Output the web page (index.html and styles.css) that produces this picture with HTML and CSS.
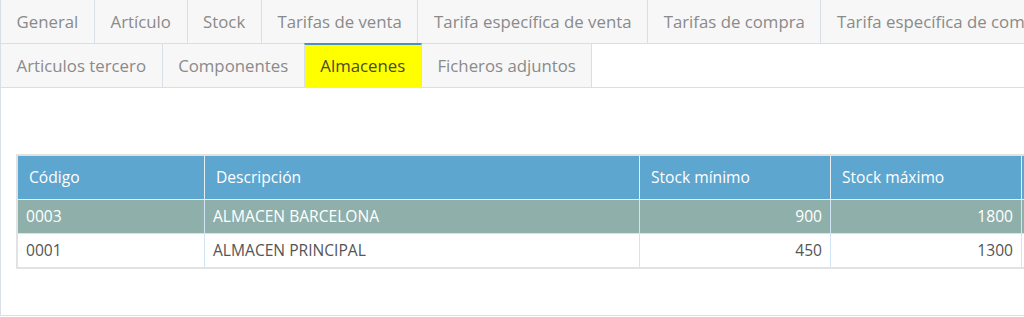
FILE: index.html
```html
<!DOCTYPE html>
<html lang="es">
<head>
<meta charset="UTF-8">
<meta name="viewport" content="width=device-width, initial-scale=1.0">
<title>Almacenes</title>
<link rel="stylesheet" href="styles.css">
</head>
<body>

<div class="tabs">
    <ul class="tab-list">
        <li class="tab">General</li>
        <li class="tab">Artículo</li>
        <li class="tab">Stock</li>
        <li class="tab">Tarifas de venta</li>
        <li class="tab">Tarifa específica de venta</li>
        <li class="tab">Tarifas de compra</li>
        <li class="tab">Tarifa específica de compra</li>
        <li class="tab">Articulos tercero</li>
        <li class="tab">Componentes</li>
        <li class="tab active">Almacenes</li>
        <li class="tab">Ficheros adjuntos</li>
    </ul>

    <div class="panel">
        <table class="grid">
            <thead>
                <tr>
                    <th class="col-code">Código</th>
                    <th class="col-desc">Descripción</th>
                    <th class="col-num">Stock mínimo</th>
                    <th class="col-num">Stock máximo</th>
                    <th class="col-extra"></th>
                </tr>
            </thead>
            <tbody>
                <tr class="selected">
                    <td>0003</td>
                    <td>ALMACEN BARCELONA</td>
                    <td class="num">900</td>
                    <td class="num">1800</td>
                    <td></td>
                </tr>
                <tr>
                    <td>0001</td>
                    <td>ALMACEN PRINCIPAL</td>
                    <td class="num">450</td>
                    <td class="num">1300</td>
                    <td></td>
                </tr>
            </tbody>
        </table>
    </div>
</div>

</body>
</html>
```

FILE: styles.css
```css
body {
    margin: 0;
    font-family: "Open Sans", Arial, sans-serif;
    color: #555;
    overflow: hidden;
    background: #fff;
}
.tabs {
    width: 1120px;
}
.tab-list {
    display: flex;
    flex-wrap: wrap;
    list-style: none;
    margin: -1px 0 0 0;
    padding: 0;
}
.tab {
    padding: 10px 15.6px;
    line-height: 23px;
    font-size: 16.8px;
    color: #8a8a8a;
    background: #f7f7f7;
    border: 1px solid #d8dfe7;
    margin: 0 -1px -1px 0;
    cursor: pointer;
}
.tab.active {
    background: #ffff00;
    color: #4a4a2a;
    border-top: 2px solid #4e8fc0;
    padding-top: 9px;
    border-bottom-color: #ffff00;
    position: relative;
}
.panel {
    border: 1px solid #d8dfe7;
    border-right: none;
    height: 229px;
    padding: 66px 0 0 15px;
    box-sizing: border-box;
    width: 1024px;
}
.grid {
    border-collapse: collapse;
    font-size: 15.6px;
    table-layout: fixed;
    width: 1100px;
    border: 2px solid #e2e2e2;
}
.grid th {
    background: #5da6d0;
    color: #fff;
    font-weight: normal;
    text-align: left;
    padding: 11px 11px 12px 11px;
    line-height: 20px;
    border: 1px solid #e6eef4;
}
.grid td {
    padding: 6px 8px 7px 8px;
    line-height: 20px;
    border: 1px solid #cfe4f5;
}
.grid tr.selected td {
    background: #8fafab;
    color: #fff;
}
.grid .num {
    text-align: right;
}
.col-code { width: 164px; }
.col-desc { width: 412px; }
.col-num { width: 168px; }
```
